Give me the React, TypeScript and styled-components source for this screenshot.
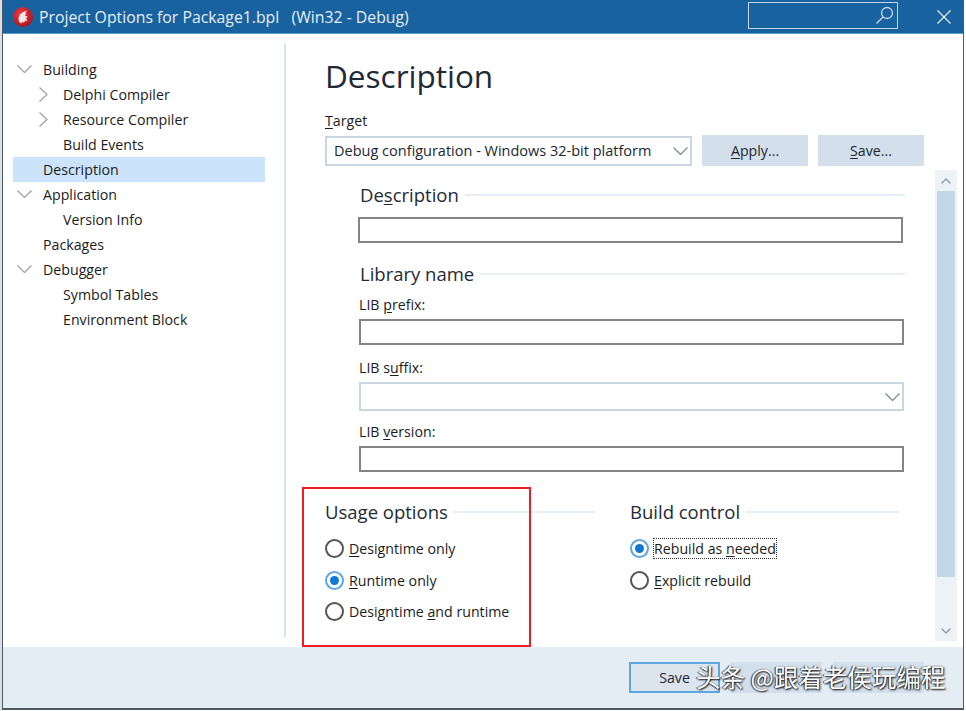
import React from 'react';
import styled, { createGlobalStyle } from 'styled-components';
import { ChevronDown, ChevronUp } from 'lucide-react';

const GlobalStyle = createGlobalStyle`
  html, body {
    margin: 0;
    padding: 0;
    background: #ffffff;
  }
  body {
    width: 966px;
    height: 711px;
    overflow: hidden;
    font-family: "Open Sans", "Noto Sans", "Liberation Sans", sans-serif;
    color: #1c1c1c;
  }
`;

const Screen = styled.div`
  position: relative;
  width: 966px;
  height: 711px;
  padding: 0 2px 0 2px;
  box-sizing: border-box;
  background: linear-gradient(90deg, #d9dfe4 0, #d9dfe4 2px, #ffffff 2px);
`;

const Dialog = styled.div`
  width: 962px;
  height: 710px;
  box-sizing: border-box;
  background: #ffffff;
  border-left: 1px solid #4d5964;
  border-right: 1px solid #4d5964;
  border-bottom: 2px solid #4d5964;
  display: flex;
  flex-direction: column;
`;

const TitleBar = styled.div`
  height: 34px;
  flex: none;
  background: #18629f;
  border-bottom: 1px solid #5b9bd0;
  box-sizing: border-box;
  display: flex;
  align-items: center;
  padding: 0 12px 0 10px;
  color: #e6eef6;
  font-size: 15.8px;
  white-space: pre;
`;

const TitleText = styled.span`
  margin-left: 6px;
  flex: 1;
`;

const QuickSearch = styled.div`
  width: 150px;
  height: 27px;
  margin-top: -3px;
  box-sizing: border-box;
  border: 1px solid #c5d8e8;
  display: flex;
  align-items: center;
  justify-content: flex-end;
  padding-right: 2px;
  margin-right: 39px;
  color: #c9dbe9;
`;

const Body = styled.div`
  flex: 1;
  display: flex;
  min-height: 0;
`;

const Sidebar = styled.div`
  width: 283px;
  flex: none;
  box-sizing: border-box;
  margin: 10px 0 10px;
  padding: 13px 19px 0 10px;
  border-right: 2px solid #d6e4f0;
`;

const TreeRow = styled.div<{ $level: number; $selected?: boolean }>`
  height: 25px;
  display: flex;
  align-items: center;
  font-size: 14.2px;
  padding-left: ${(p) => (p.$level === 0 ? 30 : 50)}px;
  position: relative;
  background: ${(p) => (p.$selected ? '#cce4fb' : 'transparent')};
`;

const TreeArrow = styled.span<{ $level: number }>`
  position: absolute;
  left: ${(p) => (p.$level === 0 ? 4 : 26)}px;
  top: ${(p) => (p.$level === 0 ? 8 : 5)}px;
  display: flex;
  color: #a3a3a3;
`;

const Main = styled.div`
  flex: 1;
  min-width: 0;
  display: flex;
  flex-direction: column;
  padding: 15px 0 0 39px;
`;

const PageTitle = styled.div`
  font-size: 31.5px;
  line-height: 54px;
  color: #1f2a36;
  height: 62px;
`;

const FieldLabel = styled.div`
  font-size: 14.2px;
  line-height: 19px;
`;

const TargetRow = styled.div`
  display: flex;
  align-items: center;
  gap: 10px;
  margin-top: 5px;
`;

const SelectBox = styled.div<{ $width: number; $height: number }>`
  width: ${(p) => p.$width}px;
  height: ${(p) => p.$height}px;
  box-sizing: border-box;
  border: 2px solid #c9d7e2;
  display: flex;
  align-items: center;
  justify-content: space-between;
  padding: 0 2px 0 7px;
  font-size: 14.5px;
  color: #1c2733;
  background: #fff;

  svg {
    color: #808b95;
  }
`;

const ActionButton = styled.div<{ $width: number; $height: number; $focused?: boolean }>`
  width: ${(p) => p.$width}px;
  height: ${(p) => p.$height}px;
  box-sizing: border-box;
  background: ${(p) => (p.$focused ? '#dce5ee' : '#d3dfeb')};
  border: ${(p) => (p.$focused ? '2px solid #5ea6e2' : 'none')};
  display: flex;
  align-items: center;
  justify-content: center;
  font-size: 14.2px;
  color: #1c2733;
`;

const ScrollArea = styled.div`
  height: 471px;
  margin-top: 4px;
  width: 632px;
  display: flex;
`;

const ScrollContent = styled.div`
  flex: 1;
  min-width: 0;
  display: flex;
  flex-direction: column;
`;

const GroupHeading = styled.div<{ $top: number }>`
  display: flex;
  align-items: center;
  gap: 6px;
  font-size: 18.5px;
  line-height: 26px;
  color: #1f2a36;
  margin-top: ${(p) => p.$top}px;

  &::after {
    content: '';
    flex: 1;
    height: 2px;
    background: #e7eff6;
  }
`;

const FormColumn = styled.div`
  padding: 0 31px 0 34px;

  ${GroupHeading} {
    margin-left: 1px;
    margin-right: -1px;
  }
`;

const TextBox = styled.div<{ $left?: number; $top?: number }>`
  height: 26px;
  box-sizing: border-box;
  border: 2px solid #858585;
  margin-left: ${(p) => p.$left ?? 0}px;
  margin-right: ${(p) => -(p.$left ?? 0)}px;
  margin-top: ${(p) => p.$top ?? 0}px;
`;

const FormLabel = styled(FieldLabel)<{ $top: number }>`
  margin-top: ${(p) => p.$top}px;
  margin-bottom: 5px;
`;

const OptionColumns = styled.div`
  display: flex;
  margin-top: 27px;
`;

const OptionGroup = styled.div<{ $width: number }>`
  width: ${(p) => p.$width}px;
  flex: none;
`;

const RadioList = styled.div`
  margin-top: 8px;
`;

const RadioRow = styled.div`
  display: flex;
  align-items: center;
  height: 31.5px;
  gap: 5px;
  font-size: 14.2px;
`;

const RadioMark = styled.span<{ $checked?: boolean }>`
  width: 19px;
  height: 19px;
  box-sizing: border-box;
  flex: none;
  border-radius: 50%;
  border: 2px solid ${(p) => (p.$checked ? '#5ea6e2' : '#555555')};
  display: flex;
  align-items: center;
  justify-content: center;

  &::after {
    content: '';
    display: ${(p) => (p.$checked ? 'block' : 'none')};
    width: 9px;
    height: 9px;
    border-radius: 50%;
    background: #0f78d4;
  }
`;

const RadioText = styled.span<{ $focused?: boolean }>`
  outline: ${(p) => (p.$focused ? '1px dotted #333333' : 'none')};
`;

const Scrollbar = styled.div`
  width: 22px;
  flex: none;
  background: #edf2f7;
  display: flex;
  flex-direction: column;
  color: #8b98a5;
`;

const ScrollStep = styled.div`
  height: 21px;
  flex: none;
  display: flex;
  align-items: center;
  justify-content: center;
`;

const ScrollThumb = styled.div`
  height: 386px;
  flex: none;
  margin: 0 2px;
  background: #c4d7e7;
`;

const ScrollRest = styled.div`
  flex: 1;
`;

const Footer = styled.div`
  height: 61px;
  flex: none;
  background: #e4ecf4;
  display: flex;
  align-items: center;
  justify-content: flex-end;
  gap: 11px;
  padding: 0 39px 0 0;
`;

const RedFrame = styled.div`
  position: absolute;
  left: 302px;
  top: 487px;
  width: 229px;
  height: 160px;
  box-sizing: border-box;
  border: 2px solid #ee1c25;
  pointer-events: none;
`;

const Watermark = styled.div`
  position: absolute;
  left: 696px;
  top: 660px;
  font-family: "Noto Sans CJK SC", "Noto Sans", sans-serif;
  font-size: 24.5px;
  line-height: 34px;
  color: #ffffff;
  text-shadow: 1px 1px 2px #000000, -1px 0 1px #333333;
  white-space: nowrap;
`;

const Key = styled.span`
  text-decoration: underline;
  text-underline-offset: 2px;
`;

const tree = [
  { label: 'Building', level: 0, arrow: 'down' },
  { label: 'Delphi Compiler', level: 1, arrow: 'right' },
  { label: 'Resource Compiler', level: 1, arrow: 'right' },
  { label: 'Build Events', level: 1 },
  { label: 'Description', level: 0, selected: true },
  { label: 'Application', level: 0, arrow: 'down' },
  { label: 'Version Info', level: 1 },
  { label: 'Packages', level: 0 },
  { label: 'Debugger', level: 0, arrow: 'down' },
  { label: 'Symbol Tables', level: 1 },
  { label: 'Environment Block', level: 1 },
];

// Delphi helmet logo, drawn roughly
const DelphiLogo = () => (
  <svg width="20" height="20" viewBox="0 0 20 20">
    <defs>
      <radialGradient id="logoBall" cx="0.4" cy="0.35" r="0.7">
        <stop offset="0" stopColor="#ef3b42" />
        <stop offset="1" stopColor="#a9141c" />
      </radialGradient>
    </defs>
    <circle cx="10" cy="10" r="10" fill="url(#logoBall)" />
    <path
      d="M14 3.500 10 5 7 7.500 5.500 11l.5 4 2.500 1.500 1-2 1.500 1.500 1-2.500 2.500 1-1.500-3.500 2-1-3-1.500 1.500-2.500-1.500.5z"
      fill="#f6e6e6"
    />
  </svg>
);

// Thin chevrons used by the tree and the combo boxes
const ChevronOpen = () => (
  <svg width="15" height="8" viewBox="0 0 15 8" fill="none" stroke="currentColor" strokeWidth="1.3">
    <path d="M.5.500 7.500 7.500 14.500.500" />
  </svg>
);

const ChevronClosed = () => (
  <svg width="9" height="15" viewBox="0 0 9 15" fill="none" stroke="currentColor" strokeWidth="1.3">
    <path d="M.5.500 8 7.500.5 14.500" />
  </svg>
);

const SearchGlyph = () => (
  <svg width="20" height="20" viewBox="0 0 20 20" fill="none" stroke="currentColor" strokeWidth="1.3">
    <circle cx="12" cy="8" r="5.500" />
    <path d="M8 12 1.500 18.500" />
  </svg>
);

const CloseGlyph = () => (
  <svg width="14" height="14" viewBox="0 0 14 14" fill="none" stroke="currentColor" strokeWidth="1.2">
    <path d="M.5.500 13.500 13.500M13.500.500 .5 13.500" />
  </svg>
);

interface RadioItem {
  label: React.ReactNode;
  checked?: boolean;
  focused?: boolean;
}

function RadioRowList({ items }: { items: RadioItem[] }) {
  return (
    <RadioList>
      {items.map((item, index) => (
        <RadioRow key={index}>
          <RadioMark $checked={item.checked} />
          <RadioText $focused={item.focused}>{item.label}</RadioText>
        </RadioRow>
      ))}
    </RadioList>
  );
}

export default function App() {
  return (
    <Screen>
      <GlobalStyle />
      <Dialog>
        <TitleBar>
          <DelphiLogo />
          <TitleText>Project Options for Package1.bpl   (Win32 - Debug)</TitleText>
          <QuickSearch>
            <SearchGlyph />
          </QuickSearch>
          <CloseGlyph />
        </TitleBar>
        <Body>
          <Sidebar>
            {tree.map((item) => (
              <TreeRow key={item.label} $level={item.level} $selected={item.selected}>
                {item.arrow && (
                  <TreeArrow $level={item.level}>
                    {item.arrow === 'down' ? <ChevronOpen /> : <ChevronClosed />}
                  </TreeArrow>
                )}
                {item.label}
              </TreeRow>
            ))}
          </Sidebar>
          <Main>
            <PageTitle>Description</PageTitle>
            <FieldLabel>
              <Key>T</Key>arget
            </FieldLabel>
            <TargetRow>
              <SelectBox $width={367} $height={30}>
                Debug configuration - Windows 32-bit platform
                <ChevronOpen />
              </SelectBox>
              <ActionButton $width={106} $height={31}>
                <span>
                  <Key>A</Key>pply...
                </span>
              </ActionButton>
              <ActionButton $width={106} $height={31}>
                <span>
                  <Key>S</Key>ave...
                </span>
              </ActionButton>
            </TargetRow>
            <ScrollArea>
              <ScrollContent>
                <FormColumn>
                  <GroupHeading $top={12}>
                    <span>
                      De<Key>s</Key>cription
                    </span>
                  </GroupHeading>
                  <TextBox $top={9} $left={-1} />
                  <GroupHeading $top={18}>Library name</GroupHeading>
                  <FormLabel $top={8}>
                    LIB <Key>p</Key>refix:
                  </FormLabel>
                  <TextBox />
                  <FormLabel $top={13}>
                    LIB s<Key>u</Key>ffix:
                  </FormLabel>
                  <SelectBox $width={545} $height={29}>
                    <span />
                    <ChevronOpen />
                  </SelectBox>
                  <FormLabel $top={11}>
                    LIB <Key>v</Key>ersion:
                  </FormLabel>
                  <TextBox $top={2} />
                </FormColumn>
                <OptionColumns>
                  <OptionGroup $width={305}>
                    <GroupHeading $top={0} style={{ width: 270 }}>
                      Usage options
                    </GroupHeading>
                    <RadioRowList
                      items={[
                        { label: <><Key>D</Key>esigntime only</> },
                        { label: <><Key>R</Key>untime only</>, checked: true },
                        { label: <>Designtime <Key>a</Key>nd runtime</> },
                      ]}
                    />
                  </OptionGroup>
                  <OptionGroup $width={269}>
                    <GroupHeading $top={0}>Build control</GroupHeading>
                    <RadioRowList
                      items={[
                        { label: <>Rebuild as <Key>n</Key>eeded</>, checked: true, focused: true },
                        { label: <><Key>E</Key>xplicit rebuild</> },
                      ]}
                    />
                  </OptionGroup>
                </OptionColumns>
              </ScrollContent>
              <Scrollbar>
                <ScrollStep>
                  <ChevronUp size={16} strokeWidth={2} />
                </ScrollStep>
                <ScrollThumb />
                <ScrollRest />
                <ScrollStep>
                  <ChevronDown size={16} strokeWidth={2} />
                </ScrollStep>
              </Scrollbar>
            </ScrollArea>
          </Main>
        </Body>
        <Footer>
          <ActionButton $width={91} $height={31} $focused>
            Save
          </ActionButton>
          <ActionButton $width={91} $height={31} />
          <ActionButton $width={91} $height={31} />
        </Footer>
      </Dialog>
      <RedFrame />
      <Watermark>头条 @跟着老侯玩编程</Watermark>
    </Screen>
  );
}
